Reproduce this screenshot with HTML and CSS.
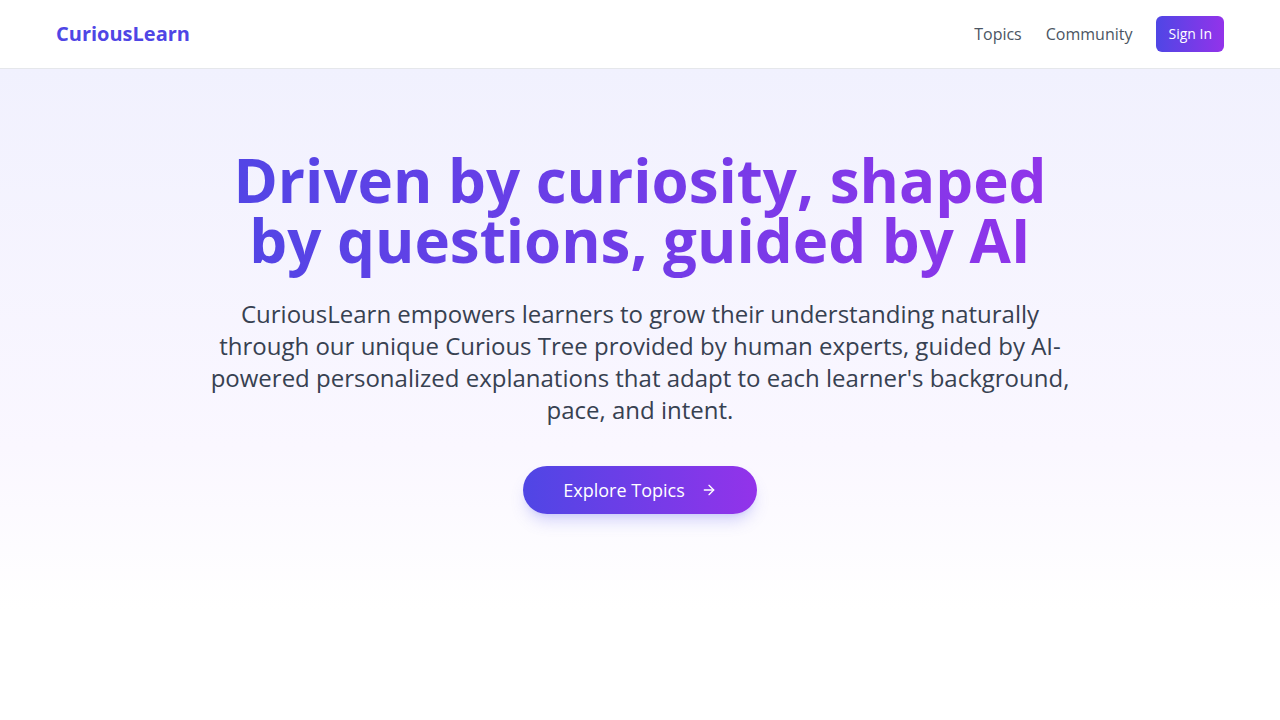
FILE: index.html
```html
<!DOCTYPE html>
<html lang="en">
<head>
    <meta charset="UTF-8">
    <meta name="viewport" content="width=device-width, initial-scale=1.0">
    <title>CuriousLearn</title>
    <link rel="stylesheet" href="styles.css">
</head>
<body>

    <!-- Top bar -->
    <header class="navbar">
        <a class="logo" href="#">CuriousLearn</a>
        <nav class="nav-links">
            <a href="#">Topics</a>
            <a href="#">Community</a>
            <a class="signin" href="#">Sign In</a>
        </nav>
    </header>

    <!-- Hero -->
    <section class="hero">
        <h1 class="hero-title">Driven by curiosity, shaped by questions, guided by AI</h1>
        <p class="hero-text">CuriousLearn empowers learners to grow their understanding naturally through our unique Curious Tree provided by human experts, guided by AI-powered personalized explanations that adapt to each learner's background, pace, and intent.</p>
        <a class="explore-btn" href="#">
            Explore Topics
            <svg width="16" height="16" viewBox="0 0 24 24" fill="none" stroke="currentColor" stroke-width="2" stroke-linecap="round" stroke-linejoin="round">
                <path d="M5 12h14"/>
                <path d="M12 5l7 7-7 7"/>
            </svg>
        </a>
    </section>

</body>
</html>
```

FILE: styles.css
```css
body {
    margin: 0;
    font-family: "Open Sans", sans-serif;
    background-color: white;
    color: #374151;
}
a {
    text-decoration: none;
}
.navbar {
    display: flex;
    justify-content: space-between;
    align-items: center;
    height: 67px;
    padding: 0 56px 1px;
    background-color: white;
    border-bottom: 1px solid #e5e7eb;
}
.logo {
    font-size: 20px;
    font-weight: 700;
    color: #4f46e5;
}
.nav-links {
    display: flex;
    align-items: center;
    gap: 24px;
}
.nav-links a {
    font-size: 16px;
    color: #4b5563;
}
.nav-links .signin {
    font-size: 14px;
    line-height: 20px;
    color: white;
    padding: 8px 12px;
    border-radius: 6px;
    background: linear-gradient(to right, #4f46e5, #9333ea);
}
/* Hero */
.hero {
    display: flex;
    flex-direction: column;
    align-items: center;
    text-align: center;
    padding: 81px 32px 96px;
    background: linear-gradient(to bottom, #f1f1fe, #faf7ff 70%, white);
}
.hero-title {
    max-width: 896px;
    margin: 0 0 20px;
    padding-bottom: 8px;
    font-size: 60px;
    font-weight: 700;
    line-height: 1;
    background: linear-gradient(to right, #4f46e5, #9333ea);
    -webkit-background-clip: text;
    background-clip: text;
    color: transparent;
}
.hero-text {
    max-width: 870px;
    margin: 0 0 40px;
    font-size: 24px;
    line-height: 32px;
    color: #374151;
}
.explore-btn {
    display: flex;
    align-items: center;
    gap: 16px;
    height: 48px;
    padding: 0 40px;
    border-radius: 9999px;
    font-size: 18px;
    color: white;
    background: linear-gradient(to right, #4f46e5, #9333ea);
    box-shadow: 0 10px 15px -3px rgba(99, 102, 241, 0.25), 0 4px 6px -4px rgba(99, 102, 241, 0.2);
}
```
